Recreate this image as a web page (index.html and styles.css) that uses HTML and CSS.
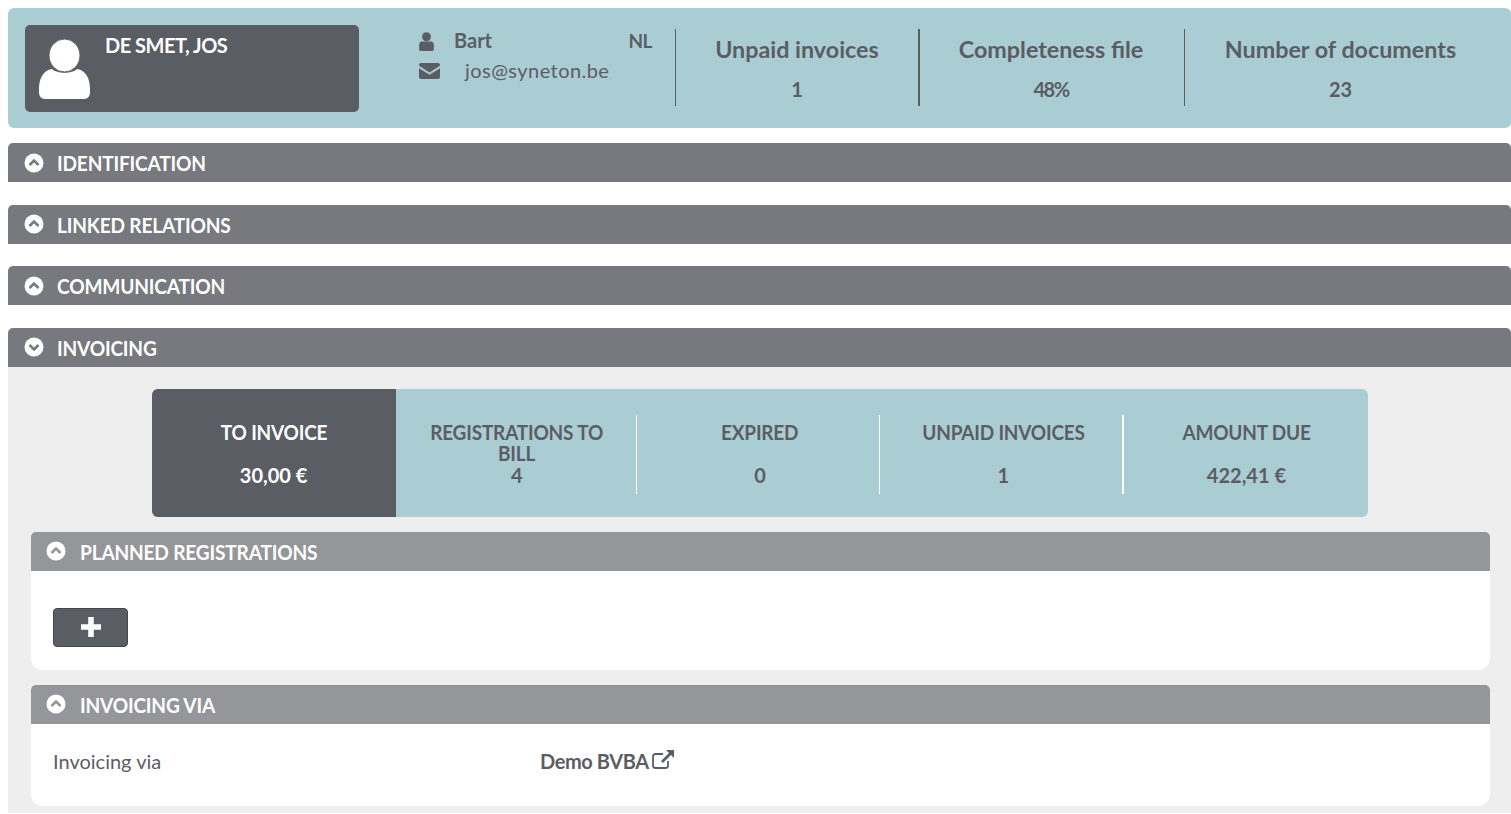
FILE: index.html
```html
<!DOCTYPE html>
<html lang="en">
<head>
<meta charset="utf-8">
<title>De Smet, Jos</title>
<link rel="stylesheet" href="styles.css">
</head>
<body>
<header class="top">
  <div class="card">
    <svg class="avatar" viewBox="0 0 51 60"><path d="M13 30C18 35 33 35 38 30 47 31 51 40 51 50v3c0 4-2 7-6 7H6c-4 0-6-3-6-7v-3C0 40 4 31 13 30z"/><ellipse class="avatar-head" cx="25.500" cy="16.500" rx="15.500" ry="16.500"/></svg>
    <div class="card-name">DE SMET, JOS</div>
  </div>
  <div class="contact">
    <div class="contact-row">
      <svg class="ico-user" viewBox="0 0 14 18"><circle cx="7" cy="4.500" r="4.200"/><path d="M2.500 9h9c1.500 0 2.500 1.500 2.500 4v3c0 1-.8 2-2 2H2c-1.200 0-2-1-2-2v-3c0-2.500 1-4 2.500-4z"/></svg>
      <span class="contact-first">Bart</span>
      <span class="contact-lang">NL</span>
    </div>
    <div class="contact-row">
      <svg class="ico-mail" viewBox="0 0 21 16"><path d="M2 0h17c1.100 0 2 .9 2 2v.8L10.500 9.500 0 2.800V2C0 .9.900 0 2 0zM0 5.200l10.500 6.600L21 5.200V14c0 1.100-.9 2-2 2H2c-1.100 0-2-.9-2-2z"/></svg>
      <span class="contact-mail">jos@syneton.be</span>
    </div>
  </div>
  <div class="kpi kpi-a"><div class="kpi-title">Unpaid invoices</div><div class="kpi-val">1</div></div>
  <div class="kpi kpi-b"><div class="kpi-title">Completeness file</div><div class="kpi-val">48%</div></div>
  <div class="kpi kpi-c"><div class="kpi-title">Number of documents</div><div class="kpi-val">23</div></div>
</header>

<div class="sections">
  <div class="bar"><svg class="chev" viewBox="0 0 20 20"><circle cx="10" cy="10" r="9.500"/><path class="chev-line" d="M5.500 12l4.500-4.500 4.500 4.500"/></svg><span class="bar-text">IDENTIFICATION</span></div>
  <div class="bar"><svg class="chev" viewBox="0 0 20 20"><circle cx="10" cy="10" r="9.500"/><path class="chev-line" d="M5.500 12l4.500-4.500 4.500 4.500"/></svg><span class="bar-text">LINKED RELATIONS</span></div>
  <div class="bar"><svg class="chev" viewBox="0 0 20 20"><circle cx="10" cy="10" r="9.500"/><path class="chev-line" d="M5.500 12l4.500-4.500 4.500 4.500"/></svg><span class="bar-text">COMMUNICATION</span></div>
  <section class="invoicing">
    <div class="bar"><svg class="chev" viewBox="0 0 20 20"><circle cx="10" cy="10" r="9.500"/><path class="chev-line" d="M5.500 8l4.500 4.500 4.500-4.500"/></svg><span class="bar-text">INVOICING</span></div>
    <div class="inv-body">
      <div class="stats">
        <div class="stat stat-active"><div class="stat-title">TO INVOICE</div><div class="stat-val">30,00 €</div></div>
        <div class="stat stat-wrap"><div class="stat-title">REGISTRATIONS TO BILL</div><div class="stat-val">4</div></div>
        <div class="stat"><div class="stat-title">EXPIRED</div><div class="stat-val">0</div></div>
        <div class="stat"><div class="stat-title">UNPAID INVOICES</div><div class="stat-val">1</div></div>
        <div class="stat"><div class="stat-title">AMOUNT DUE</div><div class="stat-val">422,41 €</div></div>
      </div>
      <div class="sub">
        <div class="bar bar-sub"><svg class="chev" viewBox="0 0 20 20"><circle cx="10" cy="10" r="9.500"/><path class="chev-line" d="M5.500 12l4.500-4.500 4.500 4.500"/></svg><span class="bar-text">PLANNED REGISTRATIONS</span></div>
        <div class="sub-body sub-planned">
          <button class="add" type="button"><svg viewBox="0 0 18 18"><path d="M6.500 0h5v6.500H18v5h-6.500V18h-5v-6.500H0v-5h6.500z"/></svg></button>
        </div>
      </div>
      <div class="sub">
        <div class="bar bar-sub"><svg class="chev" viewBox="0 0 20 20"><circle cx="10" cy="10" r="9.500"/><path class="chev-line" d="M5.500 12l4.500-4.500 4.500 4.500"/></svg><span class="bar-text">INVOICING VIA</span></div>
        <div class="sub-body sub-via">
          <div class="via-label">Invoicing via</div>
          <div class="via-value"><span>Demo BVBA</span><svg class="ico-ext" viewBox="0 0 22 19"><path class="ext-box" d="M16 11v4.500a2.500 2.500 0 0 1-2.500 2.500h-10A2.500 2.500 0 0 1 1 15.500v-9A2.500 2.500 0 0 1 3.500 4H11"/><path d="M14 0h8v8l-3-3-8 8-2-2 8-8z"/></svg></div>
        </div>
      </div>
    </div>
  </section>
</div>
</body>
</html>
```
FILE: styles.css
```css
* { box-sizing: border-box; }
html, body { height: 100%; overflow: hidden; }
body {
  margin: 0;
  padding: 8px 0 0 8px;
  background: #fff;
  font-family: "Lato", "Liberation Sans", sans-serif;
  color: #5b5d65;
}
.top {
  display: flex;
  align-items: flex-start;
  height: 120px;
  background: #aacdd4;
  border-radius: 6px;
  padding: 17px 0 0 17px;
}
.card {
  display: flex;
  width: 334px;
  height: 87px;
  flex: none;
  background: #5b5d65;
  border-radius: 5px;
  padding: 14px 0 0 14px;
  color: #fff;
}
.avatar { width: 51px; height: 60px; fill: #fff; flex: none; }
.avatar-head { stroke: #5b5d65; stroke-width: 1; }
.card-name { margin: -6px 0 0 15px; font-size: 20px; line-height: 24px; font-weight: 700; letter-spacing: -0.5px; }
.contact { width: 234px; margin: 1px 0 0 60px; flex: none; }
.contact-row { display: flex; align-items: center; height: 30px; }
.ico-user { width: 15px; height: 19px; fill: #5b5d65; flex: none; }
.ico-mail { width: 21px; height: 16px; fill: #5b5d65; flex: none; }
.contact-first { margin: -2px 0 0 20px; font-size: 20px; font-weight: 700; flex: 1; }
.contact-lang { margin: -2px 1px 0 0; font-size: 19px; font-weight: 700; letter-spacing: -.5px; }
.contact-mail { margin: -2px 0 0 25px; font-size: 20px; letter-spacing: .45px; }
.kpi {
  flex: none;
  height: 77px;
  margin-top: 4px;
  border-left: 1px solid #5b5d65;
  text-align: center;
}
.kpi-a { margin-left: 22px; width: 243px; }
.kpi-b { width: 266px; border-left-width: 2px; padding-right: 2px; }
.kpi-c { width: 312px; }
.kpi-title { font-size: 23.300px; line-height: 28px; font-weight: 700; margin-top: 6px; }
.kpi-val { font-size: 20px; line-height: 24px; font-weight: 700; margin-top: 14px; }
.kpi-b .kpi-val { letter-spacing: -1.500px; }
.sections { display: flex; flex-direction: column; gap: 22.67px; margin-top: 15px; }
.bar {
  display: flex;
  align-items: center;
  height: 39px;
  flex: none;
  background: #77797e;
  color: #fff;
  border-radius: 5px 5px 0 0;
  padding-left: 16px;
}
.bar-text {
  font-size: 21px;
  font-weight: 700;
  letter-spacing: -.2px;
  transform: scaleX(.91);
  transform-origin: left center;
}
.bar-sub { background: #959699; padding-left: 15px; }
.bar-sub .chev { margin-right: 14px; }
.chev { width: 20px; height: 20px; margin-right: 13px; fill: #fff; flex: none; }
.chev-line { fill: none; stroke: #77797e; stroke-width: 2.600; }
.bar-sub .chev-line { stroke: #959699; }
.invoicing { display: flex; flex-direction: column; }
.inv-body { background: #eee; height: 446px; padding: 22px 21px 0 23px; }
.stats {
  display: flex;
  width: 1216px;
  height: 128px;
  margin-left: 121px;
  background: #aacdd4;
  border-radius: 6px;
}
.stat {
  flex: 1 1 0;
  display: flex;
  flex-direction: column;
  align-items: center;
  padding: 33px 22px 0;
  position: relative;
  text-align: center;
}
.stat:nth-child(n+3)::before {
  content: "";
  position: absolute;
  left: -2.400px;
  top: 26px;
  height: 79px;
  border-left: 1px solid #fff;
}
.stat:last-child::before { left: -2.800px; border-left-width: 2px; }
.stat-active {
  background: #5b5d65;
  color: #fff;
  border-radius: 6px 0 0 6px;
  box-shadow: 1px 0 0 #5b5d65;
}
.stat-title {
  font-size: 20px;
  line-height: 21px;
  font-weight: 700;
  letter-spacing: -.2px;
  transform: scaleX(.95);
}
.stat-val { font-size: 20px; line-height: 21px; font-weight: 700; margin-top: 22px; }
.stat-wrap .stat-val { margin-top: 1px; }
.sub { margin-top: 15px; }
.sub-body { background: #fff; border-radius: 0 0 12px 12px; }
.sub-planned { height: 99px; padding: 37px 0 0 22px; }
.add {
  display: flex;
  align-items: center;
  justify-content: center;
  width: 75px;
  height: 39px;
  padding: 0;
  background: #5b5d65;
  border: 1px solid #45474d;
  border-radius: 4px;
}
.add svg { width: 20px; height: 20px; fill: #fff; }
.sub-via { display: flex; height: 82px; padding: 24px 0 0 22px; font-size: 20px; line-height: 26px; }
.via-label { width: 487px; }
.via-value { display: flex; gap: 3px; align-items: flex-start; font-weight: 700; letter-spacing: -.4px; }
.ico-ext { width: 22px; height: 19px; margin-top: 2px; fill: #5b5d65; }
.ext-box { fill: none; stroke: #5b5d65; stroke-width: 1.800; }
```
